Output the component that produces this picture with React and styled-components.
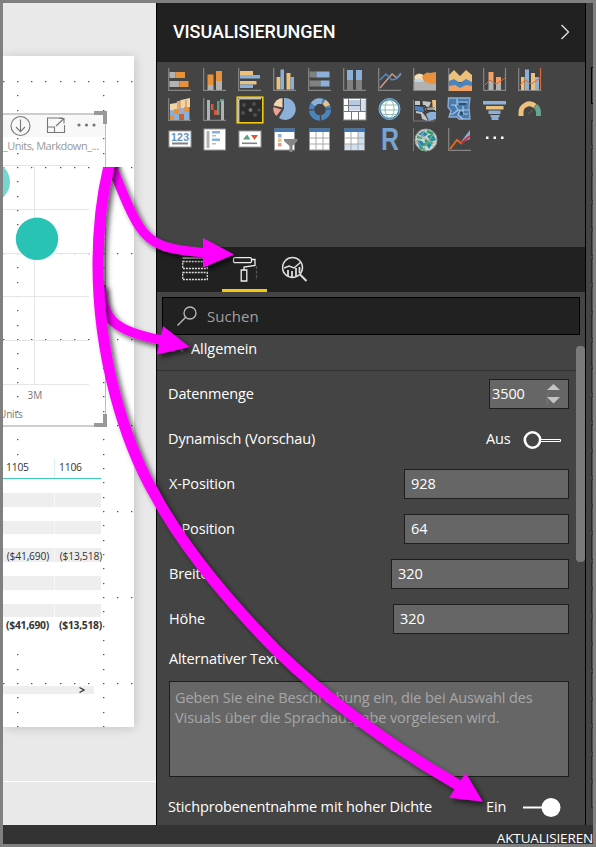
import React from 'react';
import styled, { createGlobalStyle } from 'styled-components';

const GlobalStyle = createGlobalStyle`
  * { box-sizing: border-box; }
  body { margin: 0; background: #808080; font-family: "Open Sans", "Noto Sans", sans-serif; }
`;

const Window = styled.div`
  position: relative;
  width: 596px;
  height: 847px;
  border: 3px solid #808080;
  display: flex;
  flex-direction: column;
  overflow: hidden;
  background: #444;
`;
const Workspace = styled.div`
  display: flex;
  height: 822px;
`;
const StatusBar = styled.footer`
  height: 19px;
  background: #333;
  color: #fff;
  display: flex;
  align-items: center;
  justify-content: flex-end;
  font-size: 13.5px;
  letter-spacing: -0.15px;
  line-height: 19px;
  padding-top: 7px;
  white-space: nowrap;
`;

/* Report canvas */
const Canvas = styled.main`
  width: 153px;
  background: #e9e9e9;
  padding-top: 53px;
  overflow: hidden;
`;
const ReportPage = styled.div`
  position: relative;
  width: 131px;
  height: 671px;
  background: #fff;
  box-shadow: 1px 1px 10px rgba(0, 0, 0, 0.16);
  padding-top: 57px;
`;
const PageEdge = styled.div`
  margin-top: 54px;
  height: 1px;
  background: #fff;
`;
const DotGrid = styled.svg`
  position: absolute;
  left: 0;
  top: 0;
`;
const Visual = styled.section`
  position: relative;
  width: 103px;
  height: 314px;
  border-top: 2px solid #cdcdcd;
  border-right: 1px solid #bdbdbd;
  border-bottom: 2px solid #cdcdcd;
`;
const VisualTools = styled.div`
  height: 22px;
  background: #f8f8f8;
  display: flex;
  align-items: center;
  padding-left: 7px;
`;
const VisualTitle = styled.div`
  height: 18px;
  line-height: 18px;
  font-size: 11px;
  letter-spacing: -0.5px;
  color: #999;
  white-space: nowrap;
`;
const AxisText = styled.div`
  font-size: 10px;
  line-height: 14px;
  color: #777;
  margin-left: ${(p) => p.$left}px;
  margin-top: ${(p) => p.$top || 0}px;
  letter-spacing: ${(p) => p.$ls || 0}px;
`;
const Chart = styled.svg`
  display: block;
`;
const Handle = styled.i`
  position: absolute;
  right: -2px;
  width: 13px;
  height: 13px;
  border: 0 solid #999;
  border-right-width: 4px;
  ${(p) => (p.$end ? 'bottom: -2px; border-bottom-width: 4px;' : 'top: -4px; border-top-width: 4px;')}
`;

const Matrix = styled.div`
  position: relative;
  width: 98px;
  margin-top: 32px;
`;
const MatrixRow = styled.div`
  display: grid;
  grid-template-columns: 52px 46px;
  height: ${(p) => p.$h || 13.85}px;
  background: ${(p) => (p.$shaded ? '#eee' : 'transparent')};
  border-bottom: ${(p) => (p.$head ? '1px solid #3fcabd' : '0')};
  font-size: 10.3px;
  font-weight: ${(p) => (p.$total ? 700 : 400)};
  letter-spacing: ${(p) => (p.$total ? -0.25 : -0.2)}px;
  color: #333;
  line-height: 17px;
`;
const HeadCell = styled.span`
  padding-left: ${(p) => (p.$first ? 3 : 4)}px;
  border-right: ${(p) => (p.$first ? '1px solid #d8f4f1' : '0')};
`;
const ValueCell = styled.span`
  display: flex;
  justify-content: flex-end;
  padding-right: ${(p) => (p.$first ? 5 : 0)}px;
  margin-right: ${(p) => (p.$first ? 0 : -1)}px;
  border-right: ${(p) => (p.$first ? '1px solid rgba(255,255,255,.6)' : '0')};
`;
const MatrixScroll = styled.div`
  width: 91px;
  height: 8px;
  margin-top: 55px;
  background: #eee;
  display: flex;
  justify-content: flex-end;
  align-items: center;
  padding-right: 9px;
`;

/* Visualizations panel */
const Panel = styled.aside`
  width: 430px;
  border-left: 1px solid #000;
  border-right: 1px solid #000;
  background: #444;
  color: #fff;
`;
const PanelHeader = styled.header`
  height: 59px;
  background: #212121;
  display: flex;
  align-items: center;
  justify-content: space-between;
  padding: 0 15px 1px 16px;
`;
const PanelTitle = styled.h1`
  margin: 0;
  font: 500 18px/20px Roboto, sans-serif;
  letter-spacing: -0.05px;
`;
const Gallery = styled.div`
  height: 185px;
  padding: 3px 0 0 5px;
  display: grid;
  grid-template-columns: repeat(11, 35px);
  grid-auto-rows: 30px;
`;
const GalleryItem = styled.div`
  display: flex;
  align-items: center;
  justify-content: center;
`;
const Tabs = styled.nav`
  height: 45px;
  background: #212121;
  display: flex;
  gap: 5px;
  padding-left: 15px;
`;
const Tab = styled.div`
  width: 45px;
  display: flex;
  justify-content: center;
  padding-top: 9px;
  border-bottom: 3px solid ${(p) => (p.$active ? '#f2c811' : 'transparent')};
`;
const SearchBox = styled.div`
  margin: 5px 5px 0;
  height: 38px;
  border: 1px solid #000;
  background: #212121;
  display: flex;
  align-items: center;
  gap: 10px;
  padding-left: 14px;
  font-size: 15px;
  letter-spacing: 0.05px;
  color: #a0a0a0;
`;
const FormArea = styled.div`
  display: flex;
  height: 490px;
`;
const Form = styled.div`
  flex: 1;
  overflow: hidden;
`;
const Rail = styled.div`
  width: 9px;
  padding-top: 11px;
`;
const Thumb = styled.div`
  height: 216px;
  border-radius: 4px;
  background: #7a7a7a;
`;
const SectionTitle = styled.div`
  height: 36px;
  border-bottom: 1px solid #333;
  display: flex;
  align-items: center;
  gap: 7px;
  padding: 0 0 8px 14px;
  font-size: 14.5px;
  letter-spacing: -0.05px;
`;
const Row = styled.div`
  height: ${(p) => p.$h || 45}px;
  margin-top: ${(p) => p.$top || 0}px;
  padding: 0 7px 0 ${(p) => (p.$inset ? 12 : 11)}px;
  display: flex;
  align-items: center;
  justify-content: space-between;
`;
const Label = styled.span`
  font-size: 14.5px;
  line-height: 20px;
  letter-spacing: -0.14px;
  white-space: nowrap;
`;
const Field = styled.div`
  width: ${(p) => p.$w}px;
  height: 30px;
  border: 1px solid #1e1e1e;
  background: #666;
  display: flex;
  align-items: center;
  justify-content: space-between;
  padding: 0 8px 0 ${(p) => p.$pad ?? 6}px;
  font-size: 14.5px;
  letter-spacing: -0.1px;
`;
const AltText = styled.div`
  width: 400px;
  height: 96px;
  margin: 5px 0 0 12px;
  border: 1px solid #1e1e1e;
  background: #666;
  color: #a6a6a6;
  padding: 6px 5px;
  font-size: 14.5px;
  line-height: 20px;
  letter-spacing: -0.09px;
  white-space: nowrap;
`;
const SwitchGroup = styled.div`
  display: flex;
  align-items: center;
  width: 83px;
  justify-content: space-between;
  padding-right: 8px;
`;
const FieldsStrip = styled.div`
  width: 7px;
  background: #444;
  padding: 64px 0 0 5px;
`;
const StripSearch = styled.div`
  height: 37px;
  border: 1px solid #000;
  border-right: 0;
  background: #444;
  margin-bottom: 16px;
`;
const StripItem = styled.div`
  height: 26px;
  margin-bottom: 1.6px;
  border: 1px solid #292929;
  border-right: 0;
  border-radius: 3px 0 0 3px;
  background: #505050;
`;
const Annotations = styled.svg`
  position: absolute;
  left: -3px;
  top: -3px;
  pointer-events: none;
`;

const O = '#e8913d', G = '#b2b2b2', B = '#8cb0d8', Y = '#ebc17b', D = '#4a83bd', K = '#818181';
const Axis = ({ side }) => (
  <path d={side ? 'M.7 0V22.3H22.5V0' : 'M.7 0V22.3H23'} fill="none" stroke="#858585" strokeWidth="1.2" />
);
// Draws bars given as [x, y, width, height, colour].
const Bars = ({ of }) => of.map(([x, y, w, h, c], i) => <rect key={i} x={x} y={y} width={w} height={h} fill={c} />);
const Sheet = ({ right }) => (
  <g>
    <rect x="1.5" y="1" width="20" height="21" fill="#fff" stroke="#999" />
    {right && <path d="M15 4h6v18h-6zM2 16h19v6H2z" fill="#cfe0f0" />}
    <rect x="1" y=".5" width="21" height="3.5" fill="#3f78b5" />
    <path d="M8 4v18M15 4v18M2 10h19M2 16h19" stroke="#aaa" />
  </g>
);

const galleryIcons = [
  <g><Axis /><Bars of={[[1.5, 4, 6, 6, G], [7.5, 4, 9.5, 6, O], [1.5, 13, 10, 6, G], [11.5, 13, 9, 6, O]]} /></g>,
  <g><Axis /><Bars of={[[4.5, 6.5, 6, 10.5, O], [4.5, 17, 6, 5, G], [13, 3, 6, 10, O], [13, 13, 6, 9, G]]} /></g>,
  <g><Axis /><Bars of={[[2, 3, 13, 4, Y], [2, 7, 20, 3.5, B], [2, 13, 16.5, 3.5, Y], [2, 16.5, 13, 3.5, B]]} /></g>,
  <g><Axis /><Bars of={[[3.5, 9, 4, 12.5, Y], [7.5, 1.5, 3.5, 20, B], [13.5, 5, 4, 16.5, Y], [17.5, 9, 3.5, 12.5, B]]} /></g>,
  <g><Axis /><Bars of={[[1.5, 3.5, 7, 6, K], [8.5, 3.5, 13, 6, B], [1.5, 12.5, 11, 6, K], [12.5, 12.5, 9, 6, B]]} /></g>,
  <g><Axis /><Bars of={[[4, 2, 6, 10, B], [4, 12, 6, 10, K], [13, 2, 6, 10, B], [13, 12, 6, 10, K]]} /></g>,
  <g fill="none" strokeWidth="1.4"><Axis /><path d="M2 20 8 13 14 6 19 10 23 6" stroke="#d09a8c" /><path d="M2 12 8 6 14 12 18 11 23 5" stroke="#568fc4" /></g>,
  <g><Axis /><path d="M1.500 8Q6 3 12 8l8 4v10H1.500z" fill="#f5ddb2" /><path d="M9 9Q13 3 17 5L23 4V16H12z" fill={O} /><path d="M1.500 13Q7 10 11 13T23 16v6H1.500z" fill={G} /><path d="M1.500 12Q7 8 11 14H1.500z" fill="#b5d6eb" /></g>,
  <g><Axis /><path d="M1 7 6 2l6 6 6-6 6 5v7H1z" fill={Y} /><path d="M1 13l5-2 6 4 6-4 6 3v9H1z" fill={D} /><path d="M1 18l6-1 5 3 6-3 6 1v5H1z" fill="#f2a166" /></g>,
  <g><Axis side /><Bars of={[[5.5, 4, 5, 10, '#f2a166'], [5.5, 14, 5, 8, G], [13, 9, 5, 6, '#f2a166'], [13, 15, 5, 7, G]]} /><path d="M2 17l5-5 6 4 9-6M22.5 0V22" fill="none" stroke="#d96a3a" /></g>,
  <g><Axis side /><Bars of={[[3, 9, 3.5, 13, Y], [7, 1.5, 4, 20.5, B], [13, 5, 4, 17, Y], [17, 9, 4, 13, B]]} /><path d="M2 17l5-5 6 4 9-6M22.5 0V22" fill="none" stroke="#d96a3a" /></g>,

  <g><Axis /><path d="M2 6l6-1 5-3 9-2v9l-9 5H2z" fill="#f0d5a8" /><Bars of={[[9, 3, 4, 8, '#dda873'], [17, 2, 2, 7, '#dda873'], [2, 12, 4, 5, B], [6, 11, 5, 5, O], [11, 10, 5, 6, B], [16, 9, 5.5, 5, O], [2, 17, 4, 5, O], [6, 16, 5, 6, B], [11, 16, 5, 6, '#c56338'], [16, 14, 5.5, 8, B]]} /></g>,
  <g><Axis /><Bars of={[[4, 2, 3, 20, G], [8, 6, 2.5, 6, '#d8583a'], [11, 12, 3, 5, '#d8583a'], [14, 3, 2.5, 14, '#5d9d83'], [17, 1, 4, 3, '#5d9d83'], [18, 3, 3, 19, G]]} /></g>,
  <g><rect x="-.8" y="-.8" width="25.600" height="25.600" fill="#2b2b2b" stroke="#f2c811" strokeWidth="1.600" /><path d="M.8 24V.8H23" stroke="#fff" fill="none" /><g fill="#505050"><circle cx="6" cy="7" r="1.900" /><circle cx="16" cy="6" r="1.900" /><circle cx="12.500" cy="12" r="2" fill="#777" /><circle cx="5" cy="15" r="1.900" /><circle cx="17" cy="17" r="1.900" /><circle cx="21" cy="12" r="1.500" /></g></g>,
  <g><path d="M11 11V0a10.700 11 0 1 1-5 20z" fill={B} /><path d="M9.500 9.500V0A11 11 0 0 0 .5 7.500z" fill="#f0d5ae" /><path d="M8.500 11.500.5 9a10 10 0 0 0 3 9z" fill="#eca391" /></g>,
  <g fill="none" strokeWidth="5.500"><circle cx="12" cy="11.500" r="8.500" stroke={D} strokeDasharray="12 1.350" /><path d="M5 6.500A8.500 8.500 0 0 1 14 3.300" stroke={B} /><path d="M16 4a8.500 8.500 0 0 1 3.500 4" stroke={Y} /></g>,
  <g><rect x=".5" y=".5" width="22.500" height="21.500" fill="#fff" stroke="#888" /><Bars of={[[6, 2, 12, 5, '#b8c9e3'], [18, 2, 4, 11, '#d6e0ef'], [6, 8, 11, 4.5, '#c9d8ec']]} /><path d="M5.500 1v12M6 7.500h11M17.500 1v12M1 13.500h22M8.500 14v8M15.500 14v8M1 7.500h5" stroke="#777" /></g>,
  <g><circle cx="11.500" cy="11" r="10.500" fill="#4583a6" stroke="#83b4d8" /><circle cx="11.500" cy="11" r="8.800" fill="#fff" /><g fill="none" stroke="#8fbcae" strokeWidth="1"><ellipse cx="11.500" cy="11" rx="4.500" ry="9" /><path d="M3 7h17M2.500 12h18M4 16.500h15" /></g></g>,
  <g><path d="M.5 2v21h21" stroke="#777" fill="none" /><path d="M2 3h5v4H2zM9 3l9 1-2 5-6-1zM3 13l6 1 4 5 2 4-6-2-1-5-5-1z" fill="#c4c4c4" /><path d="M2 8l8 1 1 5-9-2z" fill={D} /><path d="M13 16l4-2h6v7l-7 2z" fill={B} /><path d="M19 2h4v11h-3z" fill={Y} /><path d="M12 10l10-1-2 4-8-1z" fill="#999" /><path d="M2 7.500h10l2 5h8M9 3v6" fill="none" stroke="#333" /></g>,
  <g><path d="M.5 0H22l-1 9 1 12H11l-2-2H1l2-6-3-4z" fill="#4a7bab" stroke={B} strokeWidth="1.300" /><path d="M9 1v6H3M9 4h11M7 7l3 5h11M10 12l-5 4H2M12 12l-2 5 5 4M15 8v8h5" fill="none" stroke="#a9c9e8" strokeWidth="1.200" /><path d="M11 5h7v2h-7zM12 14h3v3h-3z" fill="#2a5178" /></g>,
  <g><Bars of={[[0, 3, 23, 3.5, B], [3, 8, 17.500, 3.5, Y], [5.500, 12.500, 12, 3.5, B], [7.500, 17, 9, 2, B], [8.500, 19, 7, 3, B]]} /></g>,
  <g fill="none" strokeWidth="5"><path d="M3 18v-3A8.500 8.500 0 0 1 17 8" stroke={Y} /><path d="M17.500 8a8.500 8.500 0 0 1 3 7v3" stroke="#6ba48c" /><path d="M10 16l5-4" stroke="#555" strokeWidth="2" /></g>,

  <g><rect x="1" y="3" width="22" height="16" fill="#fff" stroke="#999" /><text x="12" y="12.800" textAnchor="middle" fontSize="10.500" fontWeight="700" textLength="18" fontFamily="Liberation Sans" fill="#6593bf">123</text><rect x="4" y="14.500" width="16" height="2" fill={K} /></g>,
  <g><rect x="1" y="1" width="21.500" height="21" fill="#fff" stroke="#999" /><Bars of={[[3.500, 3, 3, 17, G], [9, 3, 8, 2.500, B], [9, 7, 4, 1.500, '#bbb'], [9, 10.500, 8, 2.500, B], [9, 15, 4, 1.500, '#bbb']]} /></g>,
  <g><rect x="1" y="3" width="22" height="16" fill="#fff" stroke="#999" /><path d="M5 11.500l4-5 3.500 5z" fill="#5d9d83" /><path d="M13 7h7l-3.500 5z" fill="#d8583a" /><rect x="4" y="14.500" width="15" height="1.600" fill={K} /></g>,
  <g><rect x="1.500" y="1" width="20" height="21" fill="#fff" stroke="#999" /><Bars of={[[1, .500, 21, 3.500, '#3f78b5'], [5, 6, 3.500, 3.500, B], [5, 10.500, 3.500, 3.500, Y], [5, 15, 3.500, 3.500, '#e99781']]} /><path d="M11 11h13.500v2l-5 5v6h-3v-6l-5.500-5z" fill="#868686" /></g>,
  <Sheet />,
  <Sheet right />,
  <text x="12" y="22" textAnchor="middle" fontSize="31" fontWeight="700" textLength="18" lengthAdjust="spacingAndGlyphs" fontFamily="Liberation Sans" fill="#78a3d2">R</text>,
  <g><path d="M.5 0v23" stroke="#777" /><circle cx="13" cy="12" r="11" fill="#cdd8d0" stroke="#999" /><path d="M5 6l5-3 5 3-4 3zM3 12l6 1 3 4-5 3zM14 8l6-2 3 6-5 2zM12 14l8 1-4 6z" fill="#1f8ab0" /><path d="M4 9l5 1M14 3l6 3M12 12l7 4M7 19l5 3M17 8l3 4M10 16l5 1" stroke="#27a067" strokeWidth="2.600" /><path d="M6 3l15 16M2 11l11 12M13 1L3 16M21 5L9 23M3 7l19 8" stroke="#aaa" /></g>,
  <g fill="none"><Axis /><path d="M12 15L22 2v9z" fill={B} /><path d="M2 21l7-9 5 4" stroke="#de691b" strokeWidth="2" /><path d="M13 15L22 8" stroke="#dc2637" strokeWidth="2" /></g>,
  <g><Bars of={[[3, 8.500, 2.500, 2.500, '#fff'], [10.500, 8.500, 2.500, 2.500, '#fff'], [18, 8.500, 2.500, 2.500, '#fff']]} /></g>,
];

const dots = [];
for (let r = 0; r < 46; r++) {
  const y = 25 + r * 14.33;
  const inMatrix = y > 400 && y < 584;
  for (let c = 0; c < 10; c++) {
    const x = -0.5 + c * 14.33;
    if (r % 6 === 0 ? !(inMatrix && c < 7) : c === 7 || (c === 1 && !inMatrix)) dots.push([Math.round(x), Math.round(y)]);
  }
}

const matrixRows = Array.from({ length: 10 }, (_, i) => ({
  shaded: i % 2 === 1,
  values: i === 5 ? ['($41,690)', '($13,518)'] : ['', ''],
}));

const position = [
  { label: 'X-Position', value: '928', w: 165 },
  { label: 'Y-Position', value: '64', w: 165 },
  { label: 'Breite', value: '320', w: 178 },
  { label: 'Höhe', value: '320', w: 176 },
];

function ReportCanvas() {
  return (
    <Canvas>
      <ReportPage>
        <DotGrid width="131" height="671" fill="#555">
          {dots.map(([x, y], i) => <rect key={i} x={x} y={y} width="1.4" height="1.2" />)}
        </DotGrid>
        <Visual>
          <VisualTools>
            <svg width="96" height="22" fill="none" stroke="#777" strokeWidth="1.1">
              <circle cx="10.500" cy="11" r="9.500" />
              <path d="M10.500 4.500v12M6 12l4.500 4.700L15 12" />
              <path d="M53 3H37.500v14.500h17V10M37.500 12h7v5.500M46 11l7.500-7M49 3.500h5v5" />
              <g fill="#777" stroke="none"><circle cx="69" cy="10" r="1.600" /><circle cx="76.500" cy="10" r="1.600" /><circle cx="84" cy="10" r="1.600" /></g>
            </svg>
          </VisualTools>
          <VisualTitle>_Units, Markdown_...</VisualTitle>
          <Chart width="102" height="233">
            <g stroke="#e6e6e6">
              {[10.5, 54.5, 98.5, 141.500, 185.500, 229.500].map((y) => <path key={y} d={`M0 ${y}H86`} />)}
              <path d="M31.500 10V230" />
            </g>
            <circle cx="-13.500" cy="27" r="20.500" fill="#72d8cf" />
            <circle cx="34" cy="83.800" r="21.200" fill="#28c3b5" />
          </Chart>
          <AxisText $left={24.5}>3M</AxisText>
          <AxisText $left={-4} $top={5} $ls={-0.15}>Units</AxisText>
          <Handle />
          <Handle $end />
        </Visual>
        <Matrix>
          <MatrixRow $head $h={20}>
            <HeadCell $first>1105</HeadCell>
            <HeadCell>1106</HeadCell>
          </MatrixRow>
          {matrixRows.map((r, i) => (
            <MatrixRow key={i} $shaded={r.shaded}>
              <ValueCell $first>{r.values[0]}</ValueCell>
              <ValueCell>{r.values[1]}</ValueCell>
            </MatrixRow>
          ))}
          <MatrixRow $total>
            <ValueCell $first>($41,690)</ValueCell>
            <ValueCell>($13,518)</ValueCell>
          </MatrixRow>
        </Matrix>
        <MatrixScroll>
          <svg width="6" height="8" fill="none" stroke="#333" strokeWidth="1.200"><path d="M.5 1.500 5 4 .5 6.500" /></svg>
        </MatrixScroll>
      </ReportPage>
      <PageEdge />
    </Canvas>
  );
}

function VisualizationsPanel() {
  return (
    <Panel>
      <PanelHeader>
        <PanelTitle>VISUALISIERUNGEN</PanelTitle>
        <svg width="10" height="16" fill="none" stroke="#ddd" strokeWidth="1.400"><path d="M1.500 1 8.500 8l-7 7" /></svg>
      </PanelHeader>
      <Gallery>
        {galleryIcons.map((icon, i) => (
          <GalleryItem key={i}><svg width="24" height="24" overflow="visible">{icon}</svg></GalleryItem>
        ))}
      </Gallery>
      <Tabs>
        <Tab>
          <svg width="26" height="27" fill="none" stroke="#ddd">
            <path d="M.5 2h25" strokeWidth="2" stroke="#aaa" />
            <path d="M.7 5.500h24.600v7H.7zM.7 16.500h24.600v7H.7z" strokeDasharray="2 1" strokeWidth="1.300" />
          </svg>
        </Tab>
        <Tab $active>
          <svg width="26" height="27" fill="none" stroke="#eee" strokeWidth="1.300">
            <rect x="1.500" y="1.700" width="18" height="5" rx="1.500" />
            <path d="M19.500 3.500H23V9.500L12 11v3M9.200 14h5.600v11H9.200z" />
            <path d="M24.500 10v14" stroke="#555" strokeDasharray="3 1.500" />
          </svg>
        </Tab>
        <Tab>
          <svg width="26" height="27" fill="none" stroke="#ddd" strokeWidth="1.500">
            <circle cx="10.500" cy="11.500" r="10" />
            <path d="M18 18.500l6.500 6.500" strokeWidth="2" />
            <path d="M2 12l5-2 5 2 7-6" />
            <path d="M6 20v-6M10 21.500V15M14 20.500V12M17.500 17v-6" strokeWidth="1.800" />
          </svg>
        </Tab>
      </Tabs>
      <SearchBox>
        <svg width="20" height="20" fill="none" stroke="#bbb" strokeWidth="1.300"><circle cx="13" cy="7" r="6" /><path d="M8.700 11.300.5 19.500" /></svg>
        Suchen
      </SearchBox>
      <FormArea>
        <Form>
          <SectionTitle>
            <svg width="13" height="8" fill="none" stroke="#999" strokeWidth="1.300"><path d="M1 7l5.500-6L12 7" /></svg>
            Allgemein
          </SectionTitle>
          <Row>
            <Label>Datenmenge</Label>
            <Field $w={80} $pad={2}>
              3500
              <svg width="13" height="22" fill="#c4c4c4"><path d="M0 7l6.500-6L13 7zM0 14h13l-6.500 6.500z" /><path d="M0 10v12" stroke="#888" /></svg>
            </Field>
          </Row>
          <Row>
            <Label>Dynamisch (Vorschau)</Label>
            <SwitchGroup>
              <Label>Aus</Label>
              <svg width="38" height="20" fill="none" stroke="#fff"><circle cx="9.500" cy="11" r="7.700" strokeWidth="2.600" /><path d="M18 10.500h19.500v2H18" fill="#444" /></svg>
            </SwitchGroup>
          </Row>
          {position.map((f) => (
            <Row key={f.label} $inset>
              <Label>{f.label}</Label>
              <Field $w={f.w}>{f.value}</Field>
            </Row>
          ))}
          <Row $inset $h={35}><Label>Alternativer Text</Label></Row>
          <AltText>
            Geben Sie eine Beschreibung ein, die bei Auswahl des<br />
            Visuals über die Sprachausgabe vorgelesen wird.
          </AltText>
          <Row $h={36} $top={12}>
            <Label>Stichprobenentnahme mit hoher Dichte</Label>
            <SwitchGroup>
              <Label>Ein</Label>
              <svg width="38" height="20" fill="#fff"><path d="M0 9.500h20v2H0z" /><circle cx="28" cy="10.500" r="9.500" /></svg>
            </SwitchGroup>
          </Row>
        </Form>
        <Rail><Thumb /></Rail>
      </FormArea>
    </Panel>
  );
}

export default function App() {
  return (
    <>
      <GlobalStyle />
      <Window>
        <Workspace>
          <ReportCanvas />
          <VisualizationsPanel />
          <FieldsStrip>
            <StripSearch />
            {Array.from({ length: 25 }, (_, i) => <StripItem key={i} />)}
          </FieldsStrip>
        </Workspace>
        <StatusBar>AKTUALISIEREN</StatusBar>
        <Annotations width="596" height="847" fill="none" stroke="#f0f">
          <defs>
            <filter id="shade" x="-20%" y="-20%" width="140%" height="140%">
              <feDropShadow dx="3.500" dy="3.500" stdDeviation="2.500" floodColor="#000" floodOpacity="0.6" />
            </filter>
            <clipPath id="below"><rect x="0" y="167" width="596" height="680" /></clipPath>
          </defs>
          <g clipPath="url(#below)">
            <g filter="url(#shade)">
              <path d="M108.500 158L113 169C121 188 128 209 139 226C150 244 166 250 205 252.500" strokeWidth="9.500" />
              <path d="M203 238 234 254.500 203 267.500z" fill="#f0f" stroke="none" />
            </g>
            <g filter="url(#shade)">
              <path d="M101 285C102 320 115 331 161 340" strokeWidth="9.500" />
              <path d="M163 326 189.500 347 157 354.500z" fill="#f0f" stroke="none" />
            </g>
            <g filter="url(#shade)">
              <path d="M111 158L108.500 168C102 195 98 228 98 265C98 355 124 441 155 495C182 545 228 601 276 650C324 697 390 746 458 785" strokeWidth="11" />
              <path d="M465.700 773 482.700 801.500 449 797.700z" fill="#f0f" stroke="none" />
            </g>
          </g>
        </Annotations>
      </Window>
    </>
  );
}
